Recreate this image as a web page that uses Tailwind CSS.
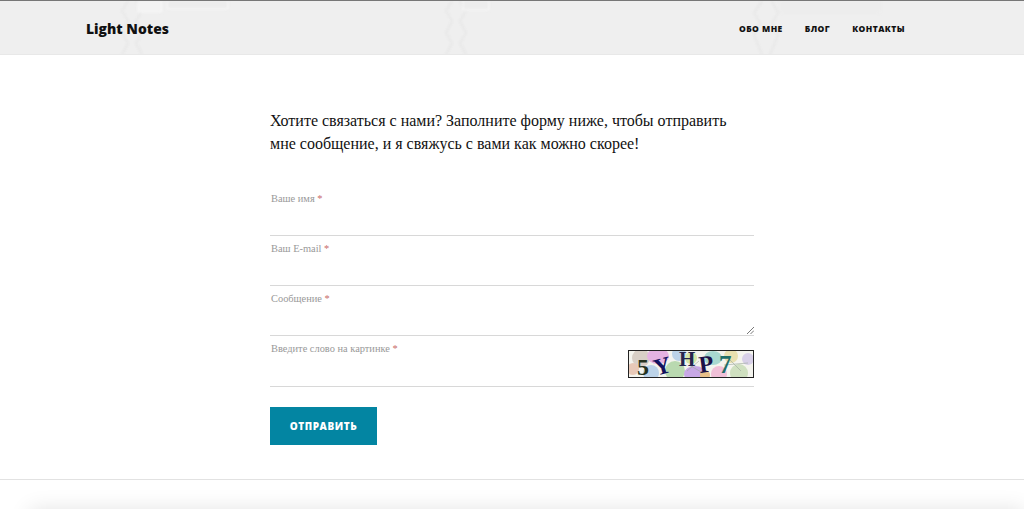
<!DOCTYPE html>
<html lang="ru">
<head>
<meta charset="utf-8">
<script src="https://cdn.jsdelivr.net/npm/@tailwindcss/browser@4"></script>
</head>
<body class="bg-white overflow-hidden">
<div class="h-[509px] w-[1024px] overflow-hidden flex flex-col">
  <header class="relative h-[55px] shrink-0 bg-[#efefef] border-t border-[#777777] border-b border-b-[#e8e8e8] overflow-hidden">
    <svg class="absolute inset-0 blur-[1px]" width="1024" height="54" fill="none" stroke="#e5e5e5" stroke-width="1.4">
      <path d="M128 0l-6 10 6 10-6 12 6 10-6 12M136 0l6 10-6 10 6 12-6 10 6 12"/>
      <path d="M452 0l-6 10 6 10-6 12 6 10-6 12M460 0l6 10-6 10 6 12-6 10 6 12"/>
      <path d="M762 0l-8 12 6 10-6 12 8 20M772 0l6 12-6 10 6 12-8 20"/>
      <rect x="138" y="-4" width="24" height="15" rx="2" stroke="#f6f6f6" fill="#f3f3f3"/>
      <rect x="167" y="-4" width="61" height="12" rx="2" stroke="#f6f6f6" fill="#ededed"/>
      <rect x="463" y="-4" width="26" height="13" rx="2" stroke="#f6f6f6" fill="#ededed"/>
      <rect x="780" y="-4" width="100" height="16" rx="2" stroke="#ededed" fill="#ededed"/>
    </svg>
    <div class="relative flex items-center justify-between h-full pt-[3px] pl-[86px] pr-[119px] font-['Open_Sans',sans-serif] text-[#111111]">
      <a class="text-[13.9px] font-extrabold leading-none">Light Notes</a>
      <nav class="flex gap-[22px] text-[8.5px] font-extrabold tracking-[0.45px] leading-none">
        <a>ОБО МНЕ</a>
        <a>БЛОГ</a>
        <a>КОНТАКТЫ</a>
      </nav>
    </div>
  </header>
  <main class="w-[484px] ml-[270px] shrink-0 font-['Liberation_Serif',serif]">
    <p class="mt-[55px] text-[16px] leading-[22.5px] text-[#111111] w-[470px]">Хотите связаться с нами? Заполните форму ниже, чтобы отправить мне сообщение, и я свяжусь с вами как можно скорее!</p>
    <form class="mt-[31px]">
      <div class="h-[50px] border-b border-[#d8d8d8] pt-[6px] pl-px text-[10.4px] leading-[14px] text-[#999999]">Ваше имя <span class="text-[#c96a6a]">*</span></div>
      <div class="h-[50px] border-b border-[#d8d8d8] pt-[6px] pl-px text-[10.4px] leading-[14px] text-[#999999]">Ваш E-mail <span class="text-[#c96a6a]">*</span></div>
      <div class="relative h-[50px] border-b border-[#d8d8d8] pt-[6px] pl-px text-[10.4px] leading-[14px] text-[#999999]">Сообщение <span class="text-[#c96a6a]">*</span>
        <svg class="absolute right-0 bottom-px" width="7" height="7" stroke="#555555" stroke-width="0.8"><path d="M0 7L7 0M3.5 7L7 3.5"/></svg>
      </div>
      <div class="relative h-[51px] border-b border-[#d8d8d8] pt-[6px] pl-px text-[10.4px] leading-[14px] text-[#999999]">Введите слово на картинке <span class="text-[#c96a6a]">*</span>
        <svg class="absolute right-0 top-[14px] border border-[#222222] overflow-hidden" width="126" height="28" viewBox="0 0 124 26">
          <rect width="124" height="26" fill="#f4f4ee"/>
          <circle cx="12" cy="7" r="9" fill="#d8cfc6"/><circle cx="4" cy="18" r="6" fill="#e8c9b8"/>
          <ellipse cx="29" cy="5" rx="11" ry="8" fill="#e4b2e2"/><circle cx="22" cy="22" r="8" fill="#bcd3e8"/>
          <circle cx="46" cy="20" r="10" fill="#b9d9b0"/>
          <circle cx="50" cy="3" r="7" fill="#bcd3e8"/><ellipse cx="66" cy="23" rx="11" ry="8" fill="#c8a8e6"/>
          <circle cx="62" cy="7" r="6" fill="#d4e6a8"/><ellipse cx="84" cy="7" rx="9" ry="7" fill="#a8d8d0"/>
          <circle cx="90" cy="23" r="8" fill="#f0c0d8"/><circle cx="102" cy="5" r="7" fill="#e8e0b0"/>
          <circle cx="110" cy="22" r="9" fill="#cfe0c0"/><circle cx="119" cy="8" r="6" fill="#d8d0e8"/>
          <circle cx="76" cy="24" r="5" fill="#e8c088"/>
          <path d="M95 14l24-2M100 8l12 12M60 14l14 8M58 20l12-10" stroke="#9aa89a" stroke-width="0.6" fill="none"/>
          <g font-family="'Liberation Serif',serif" font-weight="700">
            <text x="8" y="24" fill="#26331f" font-size="24">5</text>
            <text x="25" y="23" fill="#12125e" font-size="24" transform="rotate(-15 34 16)">Y</text>
            <text x="50" y="15" fill="#25254e" font-size="21">H</text>
            <text x="70" y="21" fill="#1c1248" font-size="24" transform="rotate(-8 78 14)">P</text>
            <text x="90" y="22" fill="#1f6f6a" font-size="25">7</text>
          </g>
        </svg>
      </div>
      <button type="button" class="block mt-[20px] w-[107px] h-[38px] bg-[#0385a2] text-white font-['Open_Sans',sans-serif] text-[10px] font-extrabold tracking-[0.55px]">ОТПРАВИТЬ</button>
    </form>
  </main>
  <div class="mt-[34px] h-px shrink-0 bg-[#e2e2e2]"></div>
  <div class="mt-[30px] ml-[30px] h-[60px] shrink-0 bg-[#f2f2f2] shadow-[0_0_22px_rgba(0,0,0,0.12)]"></div>
</div>
</body>
</html>
